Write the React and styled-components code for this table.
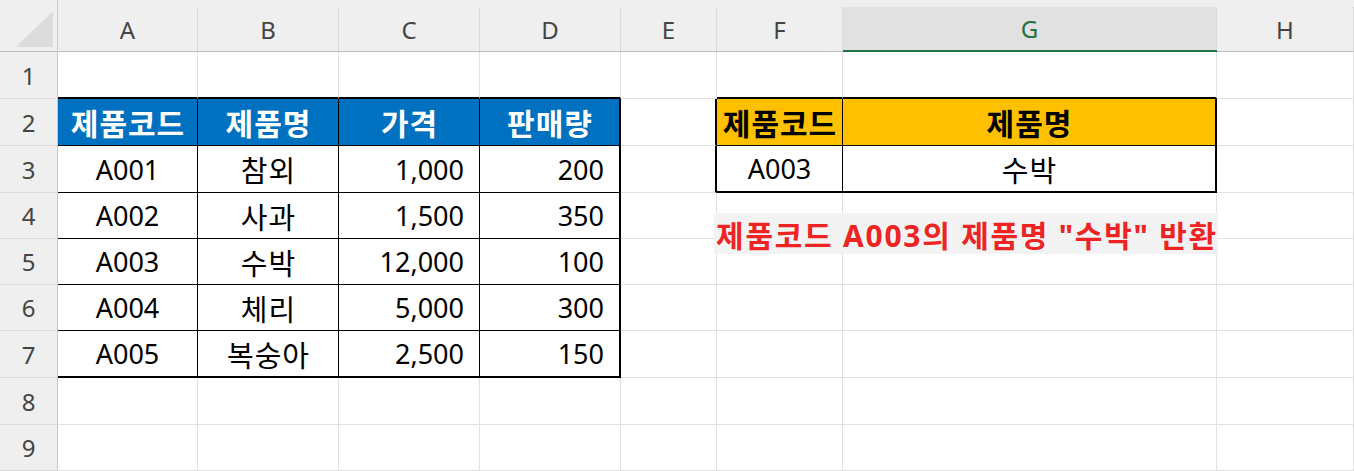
import React from 'react';
import styled, { createGlobalStyle } from 'styled-components';

const GlobalStyle = createGlobalStyle`
  html, body {
    margin: 0;
    padding: 0;
    background: #fff;
    font-family: "Noto Sans", "Noto Sans CJK KR", sans-serif;
  }
`;

const GRID = '1px solid #e1e1e1';
const THIN = '1px solid #000';
const THICK = '2px solid #000';

const COLS = ['A', 'B', 'C', 'D', 'E', 'F', 'G', 'H'];
const ROW_HEIGHTS = [47, 47, 47, 46, 46, 46, 47, 47, 46];

const TABLES = [
  { r0: 2, r1: 7, c0: 0, c1: 3 },
  { r0: 2, r1: 3, c0: 5, c1: 6 },
];

// cell content keyed by "row-col"
const BLUE = { bg: '#0070c0', color: '#fff', bold: true };
const YELLOW = { bg: '#ffc000', color: '#000', bold: true };

const CELLS = {
  '2-0': { text: '제품코드', ...BLUE },
  '2-1': { text: '제품명', ...BLUE },
  '2-2': { text: '가격', ...BLUE },
  '2-3': { text: '판매량', ...BLUE },
  '2-5': { text: '제품코드', ...YELLOW },
  '2-6': { text: '제품명', ...YELLOW },
  '3-5': { text: 'A003' },
  '3-6': { text: '수박' },
};

const products = [
  ['A001', '참외', '1,000', '200'],
  ['A002', '사과', '1,500', '350'],
  ['A003', '수박', '12,000', '100'],
  ['A004', '체리', '5,000', '300'],
  ['A005', '복숭아', '2,500', '150'],
];

products.forEach((p, i) => {
  const r = i + 3;
  CELLS[`${r}-0`] = { text: p[0] };
  CELLS[`${r}-1`] = { text: p[1] };
  CELLS[`${r}-2`] = { text: p[2], align: 'right' };
  CELLS[`${r}-3`] = { text: p[3], align: 'right' };
});

const isKorean = (s) => /[\uac00-\ud7a3]/.test(s || '');

const findTable = (r, c) =>
  TABLES.find((t) => r >= t.r0 && r <= t.r1 && c >= t.c0 && c <= t.c1);

const rightBorder = (r, c) => {
  const t = findTable(r, c);
  if (t) return c === t.c1 ? THICK : THIN;
  return findTable(r, c + 1) ? THICK : GRID;
};

const bottomBorder = (r, c) => {
  const t = findTable(r, c);
  if (t) return r === t.r1 ? THICK : THIN;
  return findTable(r + 1, c) ? THICK : GRID;
};

const cellFontSize = (p) => {
  if (p.$ko) return p.$bold ? '30px' : '29px';
  return '27px';
};

const Page = styled.div`
  position: relative;
  width: 1354px;
  height: 471px;
  overflow: hidden;
`;

const Sheet = styled.div`
  display: grid;
  grid-template-columns: 58px 140px 141px 141px 141px 96px 126px 374px 137px;
  grid-template-rows: 52px ${ROW_HEIGHTS.map((h) => `${h}px`).join(' ')};
`;

const Corner = styled.div`
  display: flex;
  justify-content: flex-end;
  align-items: flex-end;
  padding: 0 4px 4px 0;
  background: #efefef;
  border-right: 1px solid #c8c8c8;
  border-bottom: 1px solid #bdbdbd;
  box-sizing: border-box;
`;

const CornerMark = styled.div`
  width: 37px;
  height: 36px;
  background: #dcdcdc;
  clip-path: polygon(100% 0, 100% 100%, 0 100%);
`;

const ColHead = styled.div`
  display: flex;
  padding-top: 7px;
  background: #efefef;
  border-bottom: ${(p) => (p.$selected ? '2px solid #217346' : '1px solid #bdbdbd')};
  box-sizing: border-box;
`;

const ColLabel = styled.div`
  flex: 1;
  display: flex;
  align-items: center;
  justify-content: center;
  background: ${(p) => (p.$selected ? '#e1e1e1' : '#efefef')};
  border-right: 1px solid #dadada;
  color: ${(p) => (p.$selected ? '#217346' : '#444')};
  font-size: 24px;
`;

const RowHead = styled.div`
  display: flex;
  align-items: center;
  justify-content: center;
  background: #efefef;
  border-right: 1px solid #c8c8c8;
  border-bottom: 1px solid #dadada;
  box-sizing: border-box;
  color: #444;
  font-size: 24px;
`;

const Cell = styled.div`
  display: flex;
  align-items: center;
  justify-content: ${(p) => (p.$align === 'right' ? 'flex-end' : 'center')};
  padding-right: ${(p) => (p.$align === 'right' ? '15px' : '0')};
  padding-left: ${(p) => (p.$ko ? '1px' : '0')};
  background: ${(p) => p.$bg || '#fff'};
  border-right: ${(p) => p.$br};
  border-bottom: ${(p) => p.$bb};
  box-sizing: border-box;
  color: ${(p) => p.$color || '#000'};
  font-size: ${cellFontSize};
  font-weight: ${(p) => (p.$bold ? 700 : 400)};
  letter-spacing: ${(p) => (p.$ko ? '1px' : '0')};
  white-space: nowrap;
`;

const Note = styled.div`
  position: absolute;
  left: 714px;
  top: 213px;
  width: 504px;
  height: 41px;
  display: flex;
  align-items: center;
  justify-content: center;
  padding-left: 2px;
  box-sizing: border-box;
  background: #f3f3f3;
  color: #ee2424;
  font-size: 30px;
  font-weight: 700;
  letter-spacing: 1.75px;
  white-space: nowrap;
`;

export default function App() {
  return (
    <Page>
      <GlobalStyle />
      <Sheet>
        <Corner>
          <CornerMark />
        </Corner>
        {COLS.map((col) => (
          <ColHead key={col} $selected={col === 'G'}>
            <ColLabel $selected={col === 'G'}>{col}</ColLabel>
          </ColHead>
        ))}
        {ROW_HEIGHTS.map((_, i) => {
          const r = i + 1;
          return (
            <React.Fragment key={r}>
              <RowHead>{r}</RowHead>
              {COLS.map((col, c) => {
                const cell = CELLS[`${r}-${c}`] || {};
                return (
                  <Cell
                    key={col}
                    $br={rightBorder(r, c)}
                    $bb={bottomBorder(r, c)}
                    $bg={cell.bg}
                    $color={cell.color}
                    $bold={cell.bold}
                    $align={cell.align}
                    $ko={isKorean(cell.text)}
                  >
                    {cell.text}
                  </Cell>
                );
              })}
            </React.Fragment>
          );
        })}
      </Sheet>
      <Note>제품코드 A003의 제품명 "수박" 반환</Note>
    </Page>
  );
}
